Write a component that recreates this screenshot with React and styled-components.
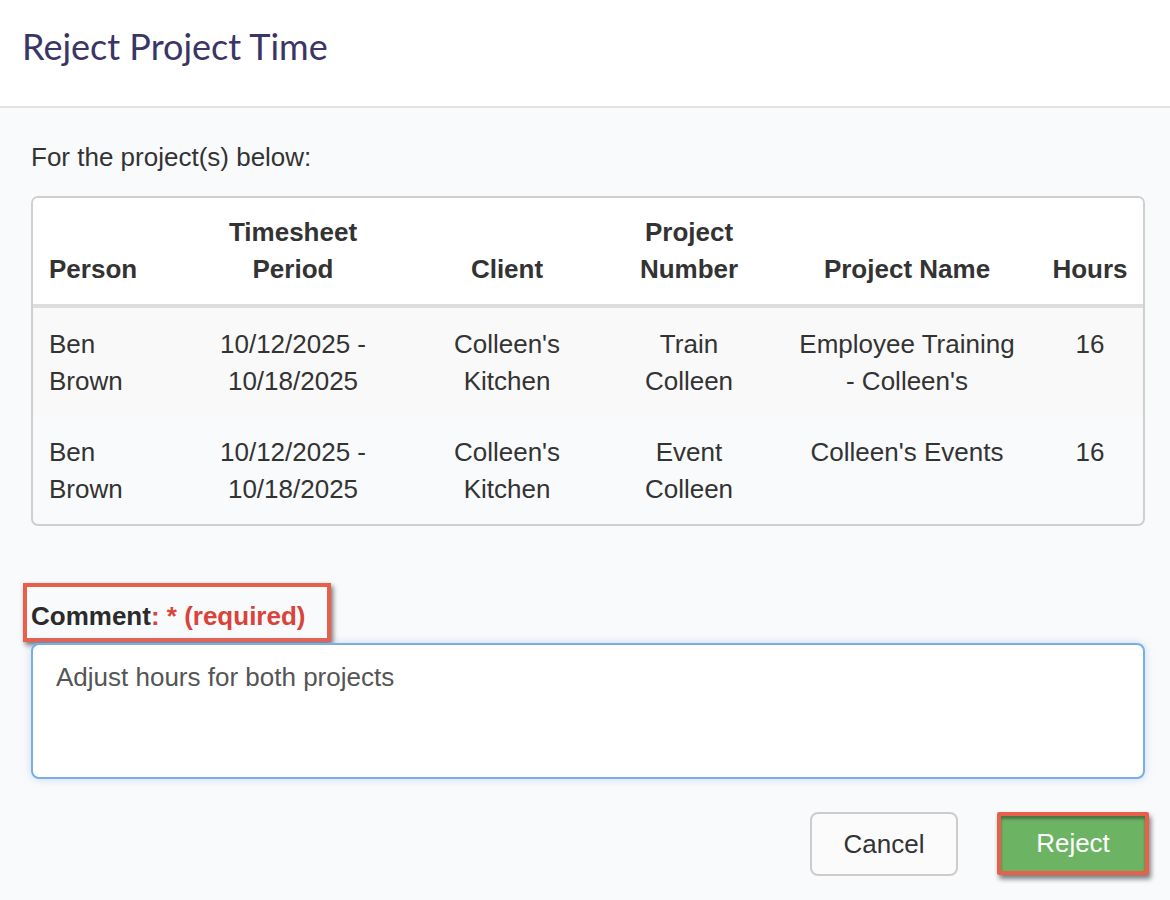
import React from "react";
import styled, { createGlobalStyle } from "styled-components";

const GlobalStyle = createGlobalStyle`
  html, body {
    margin: 0;
    padding: 0;
    background: #f9fafc;
  }
  body {
    font-family: "Liberation Sans", Arial, Helvetica, sans-serif;
    color: #333;
  }
  * { box-sizing: border-box; }
`;

const Modal = styled.div`
  width: 1170px;
  min-height: 900px;
  background: #f9fafc;
`;

const Header = styled.div`
  height: 108px;
  background: #fff;
  border-bottom: 2px solid #e3e3e6;
  display: flex;
  align-items: flex-start;
  padding: 24px 22px 0;
`;

const Title = styled.h1`
  margin: 0;
  font-family: Lato, "Open Sans", sans-serif;
  font-weight: 400;
  font-size: 36px;
  line-height: 44px;
  color: #3b3567;
`;

const Body = styled.div`
  padding: 31px 25px 0 31px;
  display: flex;
  flex-direction: column;
`;

const Intro = styled.p`
  margin: 0 0 20px;
  font-size: 26px;
  line-height: 37px;
`;

const TableBox = styled.div`
  border: 2px solid #cfcfcf;
  border-radius: 7px;
  overflow: hidden;
`;

const Table = styled.table`
  width: 100%;
  border-collapse: collapse;
  table-layout: fixed;
  font-size: 26px;
  line-height: 37px;
`;

const Th = styled.th`
  background: #fff;
  font-weight: 700;
  vertical-align: bottom;
  text-align: ${({ $left }) => ($left ? "left" : "center")};
  padding: 16px 14px;
  border-bottom: 4px solid #dddddd;
  &:first-child { padding-left: 16px; }
`;

const Tr = styled.tr`
  background: ${({ $striped }) => ($striped ? "#f9f9f9" : "transparent")};
  & + & td { border-top: 1px solid #dddddd; }
`;

const Td = styled.td`
  vertical-align: top;
  text-align: ${({ $left }) => ($left ? "left" : "center")};
  padding: 18px 14px 16px;
  &:first-child { padding-left: 16px; }
`;

// highlight frame drawn round the comment label
const LabelMark = styled.div`
  align-self: flex-start;
  margin: 57px 0 1px -8px;
  border: 4px solid #e8604c;
  box-shadow: 2px 3px 5px rgba(0, 0, 0, 0.55);
  padding: 11px 22px 3px 4px;
`;

const Label = styled.label`
  display: block;
  font-size: 26px;
  line-height: 37px;
  font-weight: 700;
  color: #2b2b2b;
`;

const Required = styled.span`
  color: #d9443a;
`;

const Comment = styled.textarea`
  display: block;
  width: 100%;
  height: 136px;
  resize: none;
  border: 2px solid #7aaee3;
  border-radius: 8px;
  background: #fff;
  box-shadow: 0 0 9px rgba(102, 160, 225, 0.35);
  padding: 14px 23px 10px;
  font-family: "Liberation Sans", Arial, Helvetica, sans-serif;
  font-size: 26px;
  line-height: 37px;
  color: #555;
  outline: none;
`;

const Footer = styled.div`
  display: flex;
  justify-content: flex-end;
  align-items: flex-start;
  gap: 39px;
  margin-top: 33px;
`;

const Button = styled.button`
  height: 64px;
  width: 148px;
  border-radius: 8px;
  font-family: "Liberation Sans", Arial, Helvetica, sans-serif;
  font-size: 26px;
  cursor: pointer;
  border: 2px solid #cccccc;
  background: #fbfbfb;
  color: #333;
`;

const RejectButton = styled(Button)`
  width: 152px;
  height: 63px;
  border-radius: 2px;
  border: 4px solid #e8604c;
  background: #6cb464;
  color: #fff;
  box-shadow: inset 0 3px 3px rgba(0, 0, 0, 0.35), 2px 4px 5px rgba(0, 0, 0, 0.5);
  margin-right: -4px;
`;

const rows = [
  {
    person: ["Ben", "Brown"],
    period: ["10/12/2025 -", "10/18/2025"],
    client: ["Colleen's", "Kitchen"],
    number: ["Train", "Colleen"],
    name: ["Employee Training", "- Colleen's"],
    hours: "16",
  },
  {
    person: ["Ben", "Brown"],
    period: ["10/12/2025 -", "10/18/2025"],
    client: ["Colleen's", "Kitchen"],
    number: ["Event", "Colleen"],
    name: ["Colleen's Events"],
    hours: "16",
  },
];

const Lines = ({ parts }) =>
  parts.map((p, i) => (
    <React.Fragment key={i}>
      {i > 0 && <br />}
      {p}
    </React.Fragment>
  ));

export default function App() {
  return (
    <>
      <GlobalStyle />
      <Modal>
        <Header>
          <Title>Reject Project Time</Title>
        </Header>
        <Body>
          <Intro>For the project(s) below:</Intro>
          <TableBox>
            <Table>
              <colgroup>
                <col style={{ width: 140 }} />
                <col style={{ width: 240 }} />
                <col style={{ width: 188 }} />
                <col style={{ width: 176 }} />
                <col style={{ width: 260 }} />
                <col style={{ width: 106 }} />
              </colgroup>
              <thead>
                <tr>
                  <Th $left>Person</Th>
                  <Th>Timesheet<br />Period</Th>
                  <Th>Client</Th>
                  <Th>Project<br />Number</Th>
                  <Th>Project Name</Th>
                  <Th>Hours</Th>
                </tr>
              </thead>
              <tbody>
                {rows.map((r, i) => (
                  <Tr key={i} $striped={i % 2 === 0}>
                    <Td $left><Lines parts={r.person} /></Td>
                    <Td><Lines parts={r.period} /></Td>
                    <Td><Lines parts={r.client} /></Td>
                    <Td><Lines parts={r.number} /></Td>
                    <Td><Lines parts={r.name} /></Td>
                    <Td>{r.hours}</Td>
                  </Tr>
                ))}
              </tbody>
            </Table>
          </TableBox>

          <LabelMark>
            <Label htmlFor="reject-comment">
              Comment<Required>: * (required)</Required>
            </Label>
          </LabelMark>
          <Comment id="reject-comment" defaultValue="Adjust hours for both projects" />

          <Footer>
            <Button type="button">Cancel</Button>
            <RejectButton type="button">Reject</RejectButton>
          </Footer>
        </Body>
      </Modal>
    </>
  );
}
